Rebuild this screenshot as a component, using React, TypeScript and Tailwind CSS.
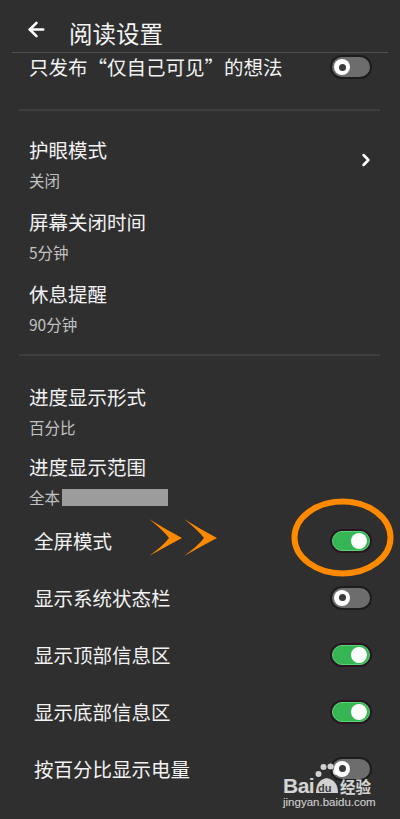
import { ArrowLeft, ChevronRight } from "lucide-react";

const font = { fontFamily: '"Noto Sans CJK SC", "Noto Sans", sans-serif' };
const latin = { fontFamily: '"Liberation Sans", Arial, sans-serif' };

function Toggle({ on }: { on?: boolean }) {
  if (on) {
    return (
      <div className="w-[42px] h-[24px] rounded-full bg-[#2a1424] p-[2px] shrink-0">
        <div className="w-full h-full rounded-full bg-[#36b554] border border-[#55d872] flex items-center justify-end pr-[2px]">
          <div className="w-[16px] h-[16px] rounded-full bg-white" />
        </div>
      </div>
    );
  }
  return (
    <div className="w-[42px] h-[24px] rounded-full bg-[#1c1c1c] p-[2px] shrink-0">
      <div className="w-full h-full rounded-full bg-[#6d6d6d] flex items-center pl-[2px]">
        <div className="w-[16px] h-[16px] rounded-full bg-white flex items-center justify-center">
          <div className="w-[7px] h-[7px] rounded-full bg-[#3a3a3a]" />
        </div>
      </div>
    </div>
  );
}

function Item({ title, sub, h, chevron }: { title: string; sub: React.ReactNode; h: string; chevron?: boolean }) {
  return (
    <div className={`${h} pl-[29px] pr-[28px] flex justify-between`}>
      <div className="flex flex-col">
        <span className="text-[19.5px] leading-[24px] text-[#f2f2f2]">{title}</span>
        <span className="mt-2 text-[15.5px] leading-[20px] text-[#c2c2c2]">{sub}</span>
      </div>
      {chevron && <ChevronRight size={20} strokeWidth={3} className="text-white mt-[12px] -mr-[4px]" />}
    </div>
  );
}

function ToggleRow({ title, on, children }: { title: string; on?: boolean; children?: React.ReactNode }) {
  return (
    <div className="relative h-[57px] pl-[34px] pr-[28px] flex items-center justify-between">
      <span className="text-[19.5px] leading-[24px] text-[#f2f2f2]">{title}</span>
      {children}
      <Toggle on={on} />
    </div>
  );
}

function Arrows() {
  return (
    <svg className="absolute left-[149px] top-[7px]" width="70" height="38" viewBox="0 0 70 38">
      <path d="M0 0 Q16 10 33 19 Q16 28 0 37 Q14 27 20 19 Q14 11 0 0Z" fill="#ff8a00" />
      <path d="M35 0 Q51 10 68 19 Q51 28 35 37 Q49 27 55 19 Q49 11 35 0Z" fill="#ff8a00" />
    </svg>
  );
}

function Ellipse() {
  return (
    <svg className="absolute left-[290px] -top-[14px]" width="106" height="80" viewBox="0 0 106 80">
      <ellipse cx="52.5" cy="39.5" rx="48" ry="36" fill="none" stroke="#ff8a00" strokeWidth="6" />
    </svg>
  );
}

function Watermark() {
  return (
    <div className="absolute left-[282px] top-[756px] w-[96px] h-[58px] text-white/80 pointer-events-none">
      <svg className="absolute left-[33px] top-[7px]" width="24" height="32" viewBox="0 0 24 32">
        <circle cx="3.5" cy="11" r="3" fill="rgba(255,255,255,0.78)" />
        <circle cx="8.5" cy="4" r="3" fill="rgba(255,255,255,0.78)" />
        <circle cx="15.5" cy="3.5" r="3" fill="rgba(255,255,255,0.78)" />
        <circle cx="21" cy="9" r="3" fill="rgba(255,255,255,0.78)" />
        <path d="M1 30 Q1 17 11.5 15 Q23 17 23 30 Z" fill="rgba(255,255,255,0.78)" />
      </svg>
      <span className="absolute left-[1px] top-[18px] text-[21px] leading-[24px] font-bold tracking-[-0.5px]" style={latin}>
        Bai
      </span>
      <span className="absolute left-[36px] top-[26px] text-[11px] leading-[12px] font-bold text-[#3a3a3a]" style={latin}>
        du
      </span>
      <span className="absolute left-[58px] top-[20px] text-[15.5px] leading-[20px] font-bold" style={font}>
        经验
      </span>
      <span className="absolute left-[1px] top-[39px] text-[11.5px] leading-[14px]" style={latin}>
        jingyan.baidu.com
      </span>
    </div>
  );
}

export default function App() {
  return (
    <div className="relative w-[400px] h-[819px] bg-[#2f2f2f] overflow-hidden" style={font}>
      <div className="h-[52px] flex items-center pt-[14px] pl-[25px]">
        <ArrowLeft size={23} strokeWidth={2.6} className="text-white mb-[7px]" />
        <span className="ml-[21px] text-[23.5px] leading-[28px] text-[#f4f4f4]">阅读设置</span>
      </div>
      <div className="mx-[12px] h-px bg-[#505050]" />

      <div className="h-[56px] pt-[2px] pl-[29px] pr-[28px]">
        <div className="h-[24px] flex items-center justify-between">
          <span className="text-[19.5px] leading-[24px] text-[#f2f2f2]">只发布“仅自己可见”的想法</span>
          <Toggle />
        </div>
      </div>
      <div className="ml-[19px] w-[361px] h-[2px] bg-[#3f3f3f]" />

      <div className="pt-[27px]">
        <Item h="h-[72px]" title="护眼模式" sub="关闭" chevron />
        <Item h="h-[72px]" title="屏幕关闭时间" sub="5分钟" />
        <Item h="h-[72px]" title="休息提醒" sub="90分钟" />
      </div>
      <div className="ml-[19px] w-[361px] h-[2px] bg-[#3f3f3f]" />

      <div className="pt-[29px]">
        <Item h="h-[70px]" title="进度显示形式" sub="百分比" />
        <Item
          h="h-[57px]"
          title="进度显示范围"
          sub={
            <span className="flex items-center">
              全本
              <span className="ml-[2px] w-[106px] h-[17px] bg-[#9c9c9c]" />
            </span>
          }
        />
        <ToggleRow title="全屏模式" on>
          <Arrows />
          <Ellipse />
        </ToggleRow>
        <ToggleRow title="显示系统状态栏" />
        <ToggleRow title="显示顶部信息区" on />
        <ToggleRow title="显示底部信息区" on />
        <ToggleRow title="按百分比显示电量" />
      </div>

      <Watermark />
    </div>
  );
}
